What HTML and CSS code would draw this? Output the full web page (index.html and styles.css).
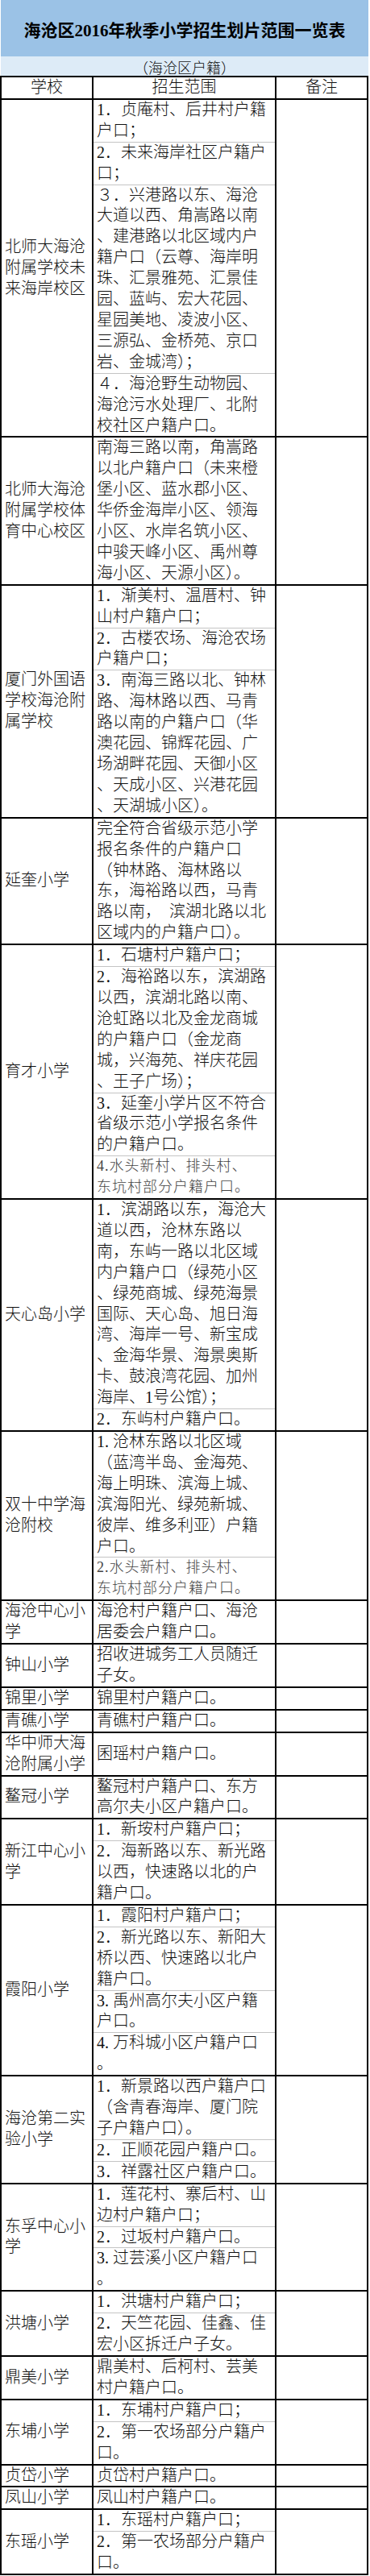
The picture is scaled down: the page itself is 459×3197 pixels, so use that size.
FILE: index.html
```html
<!DOCTYPE html>
<html lang="zh-CN">
<head>
<meta charset="utf-8">
<title>海沧区2016年秋季小学招生划片范围一览表</title>
<link rel="stylesheet" href="styles.css">
</head>
<body>
<div class="sheet">
  <div class="title">海沧区2016年秋季小学招生划片范围一览表</div>
  <div class="subtitle">（海沧区户籍）</div>
  <div class="table">
    <div class="row head">
      <div class="name">学校</div>
      <div class="range">招生范围</div>
      <div class="note">备注</div>
    </div>

    <div class="row">
      <div class="name">北师大海沧附属学校未来海岸校区</div>
      <div class="range">
        <div class="sec">1．贞庵村、后井村户籍<br>户口；</div>
        <div class="sec">2．未来海岸社区户籍户<br>口；</div>
        <div class="sec">３．兴港路以东、海沧<br>大道以西、角嵩路以南<br>、建港路以北区域内户<br>籍户口（云尊、海岸明<br>珠、汇景雅苑、汇景佳<br>园、蓝屿、宏大花园、<br>星园美地、凌波小区、<br>三源弘、金桥苑、京口<br>岩、金城湾）；</div>
        <div class="sec">４．海沧野生动物园、<br>海沧污水处理厂、北附<br>校社区户籍户口。</div>
      </div>
      <div class="note"></div>
    </div>

    <div class="row">
      <div class="name">北师大海沧附属学校体育中心校区</div>
      <div class="range">
        <div class="sec">南海三路以南，角嵩路<br>以北户籍户口（未来橙<br>堡小区、蓝水郡小区、<br>华侨金海岸小区、领海<br>小区、水岸名筑小区、<br>中骏天峰小区、禹州尊<br>海小区、天源小区）。</div>
      </div>
      <div class="note"></div>
    </div>

    <div class="row">
      <div class="name">厦门外国语学校海沧附属学校</div>
      <div class="range">
        <div class="sec">1．渐美村、温厝村、钟<br>山村户籍户口；</div>
        <div class="sec">2．古楼农场、海沧农场<br>户籍户口；</div>
        <div class="sec">3．南海三路以北、钟林<br>路、海林路以西、马青<br>路以南的户籍户口（华<br>澳花园、锦辉花园、广<br>场湖畔花园、天御小区<br>、天成小区、兴港花园<br>、天湖城小区）。</div>
      </div>
      <div class="note"></div>
    </div>

    <div class="row">
      <div class="name">延奎小学</div>
      <div class="range">
        <div class="sec">完全符合省级示范小学<br>报名条件的户籍户口<br>（钟林路、海林路以<br>东，海裕路以西，马青<br>路以南，&ensp;滨湖北路以北<br>区域内的户籍户口）。</div>
      </div>
      <div class="note"></div>
    </div>

    <div class="row">
      <div class="name">育才小学</div>
      <div class="range">
        <div class="sec">1．石塘村户籍户口；</div>
        <div class="sec">2．海裕路以东，滨湖路<br>以西，滨湖北路以南、<br>沧虹路以北及金龙商城<br>的户籍户口（金龙商<br>城，兴海苑、祥庆花园<br>、王子广场）；</div>
        <div class="sec">3．延奎小学片区不符合<br>省级示范小学报名条件<br>的户籍户口。</div>
        <div class="sec alt">4.水头新村、排头村、<br>东坑村部分户籍户口。</div>
      </div>
      <div class="note"></div>
    </div>

    <div class="row">
      <div class="name">天心岛小学</div>
      <div class="range">
        <div class="sec">1．滨湖路以东，海沧大<br>道以西，沧林东路以<br>南，东屿一路以北区域<br>内户籍户口（绿苑小区<br>、绿苑商城、绿苑海景<br>国际、天心岛、旭日海<br>湾、海岸一号、新宝成<br>、金海华景、海景奥斯<br>卡、鼓浪湾花园、加州<br>海岸、1号公馆）；</div>
        <div class="sec">2．东屿村户籍户口。</div>
      </div>
      <div class="note"></div>
    </div>

    <div class="row">
      <div class="name">双十中学海沧附校</div>
      <div class="range">
        <div class="sec">1. 沧林东路以北区域<br>（蓝湾半岛、金海苑、<br>海上明珠、滨海上城、<br>滨海阳光、绿苑新城、<br>彼岸、维多利亚）户籍<br>户口。</div>
        <div class="sec alt">2.水头新村、排头村、<br>东坑村部分户籍户口。</div>
      </div>
      <div class="note"></div>
    </div>

    <div class="row">
      <div class="name">海沧中心小学</div>
      <div class="range">
        <div class="sec">海沧村户籍户口、海沧<br>居委会户籍户口。</div>
      </div>
      <div class="note"></div>
    </div>

    <div class="row">
      <div class="name">钟山小学</div>
      <div class="range">
        <div class="sec">招收进城务工人员随迁<br>子女。</div>
      </div>
      <div class="note"></div>
    </div>

    <div class="row">
      <div class="name">锦里小学</div>
      <div class="range">
        <div class="sec">锦里村户籍户口。</div>
      </div>
      <div class="note"></div>
    </div>

    <div class="row">
      <div class="name">青礁小学</div>
      <div class="range">
        <div class="sec">青礁村户籍户口。</div>
      </div>
      <div class="note"></div>
    </div>

    <div class="row">
      <div class="name">华中师大海沧附属小学</div>
      <div class="range mid">
        <div class="sec">囷瑶村户籍户口。</div>
      </div>
      <div class="note"></div>
    </div>

    <div class="row">
      <div class="name">鳌冠小学</div>
      <div class="range">
        <div class="sec">鳌冠村户籍户口、东方<br>高尔夫小区户籍户口。</div>
      </div>
      <div class="note"></div>
    </div>

    <div class="row">
      <div class="name">新江中心小学</div>
      <div class="range">
        <div class="sec">1．新垵村户籍户口；</div>
        <div class="sec">2．海新路以东、新光路<br>以西，快速路以北的户<br>籍户口。</div>
      </div>
      <div class="note"></div>
    </div>

    <div class="row">
      <div class="name">霞阳小学</div>
      <div class="range">
        <div class="sec">1．霞阳村户籍户口；</div>
        <div class="sec">2．新光路以东、新阳大<br>桥以西、快速路以北户<br>籍户口。</div>
        <div class="sec">3. 禹州高尔夫小区户籍<br>户口。</div>
        <div class="sec">4. 万科城小区户籍户口<br>。</div>
      </div>
      <div class="note"></div>
    </div>

    <div class="row">
      <div class="name">海沧第二实验小学</div>
      <div class="range">
        <div class="sec">1．新景路以西户籍户口<br>（含青春海岸、厦门院<br>子户籍户口）。</div>
        <div class="sec">2．正顺花园户籍户口。</div>
        <div class="sec">3．祥露社区户籍户口。</div>
      </div>
      <div class="note"></div>
    </div>

    <div class="row">
      <div class="name">东孚中心小学</div>
      <div class="range">
        <div class="sec">1．莲花村、寨后村、山<br>边村户籍户口；</div>
        <div class="sec">2．过坂村户籍户口。</div>
        <div class="sec">3. 过芸溪小区户籍户口<br>。</div>
      </div>
      <div class="note"></div>
    </div>

    <div class="row">
      <div class="name">洪塘小学</div>
      <div class="range">
        <div class="sec">1．洪塘村户籍户口；</div>
        <div class="sec">2．天竺花园、佳鑫、佳<br>宏小区拆迁户子女。</div>
      </div>
      <div class="note"></div>
    </div>

    <div class="row">
      <div class="name">鼎美小学</div>
      <div class="range">
        <div class="sec">鼎美村、后柯村、芸美<br>村户籍户口。</div>
      </div>
      <div class="note"></div>
    </div>

    <div class="row">
      <div class="name">东埔小学</div>
      <div class="range">
        <div class="sec">1．东埔村户籍户口；</div>
        <div class="sec">2．第一农场部分户籍户<br>口。</div>
      </div>
      <div class="note"></div>
    </div>

    <div class="row">
      <div class="name">贞岱小学</div>
      <div class="range">
        <div class="sec">贞岱村户籍户口。</div>
      </div>
      <div class="note"></div>
    </div>

    <div class="row">
      <div class="name">凤山小学</div>
      <div class="range">
        <div class="sec">凤山村户籍户口。</div>
      </div>
      <div class="note"></div>
    </div>

    <div class="row">
      <div class="name">东瑶小学</div>
      <div class="range">
        <div class="sec">1．东瑶村户籍户口；</div>
        <div class="sec">2．第一农场部分户籍户<br>口。</div>
      </div>
      <div class="note"></div>
    </div>
  </div>
</div>
</body>
</html>
```

FILE: styles.css
```css
html, body {
  margin: 0;
  padding: 0;
  background: #ffffff;
}

.sheet {
  width: 457px;
  font-family: "Liberation Serif", "Noto Sans CJK SC", serif;
  font-size: 20px;
  font-weight: 300;
  color: #111111;
}

.title {
  height: 70px;
  margin-left: 1px;
  background: #9bc2e6;
  display: flex;
  align-items: center;
  justify-content: center;
  font-size: 21px;
  font-weight: 700;
  color: #000000;
  padding-top: 2px;
  box-sizing: border-box;
}

.subtitle {
  height: 24px;
  margin-left: 1px;
  background: #ddebf7;
  display: flex;
  align-items: center;
  justify-content: center;
  font-size: 18px;
  padding-top: 2px;
  box-sizing: border-box;
}

.table {
  box-sizing: border-box;
  width: 457px;
  border: 2px solid #000000;
  border-bottom: 0;
}

.row {
  display: grid;
  grid-template-columns: 114px 227px 112px;
  border-bottom: 2px solid #000000;
  line-height: 25.9px;
}

.name {
  border-right: 2px solid #000000;
  padding-left: 4px;
  display: flex;
  align-items: center;
}

.range {
  border-right: 2px solid #000000;
  display: flex;
  flex-direction: column;
}

.range.mid {
  justify-content: center;
}

.sec {
  padding-left: 4px;
  white-space: nowrap;
}

.sec + .sec {
  border-top: 1px solid #c4c4c4;
}

.sec.alt {
  color: #444444;
  font-size: 18px;
  letter-spacing: 1px;
}

.head .name,
.head .range,
.head .note {
  justify-content: center;
  text-align: center;
  padding-left: 0;
}

.head .note {
  display: flex;
  align-items: center;
}
```
